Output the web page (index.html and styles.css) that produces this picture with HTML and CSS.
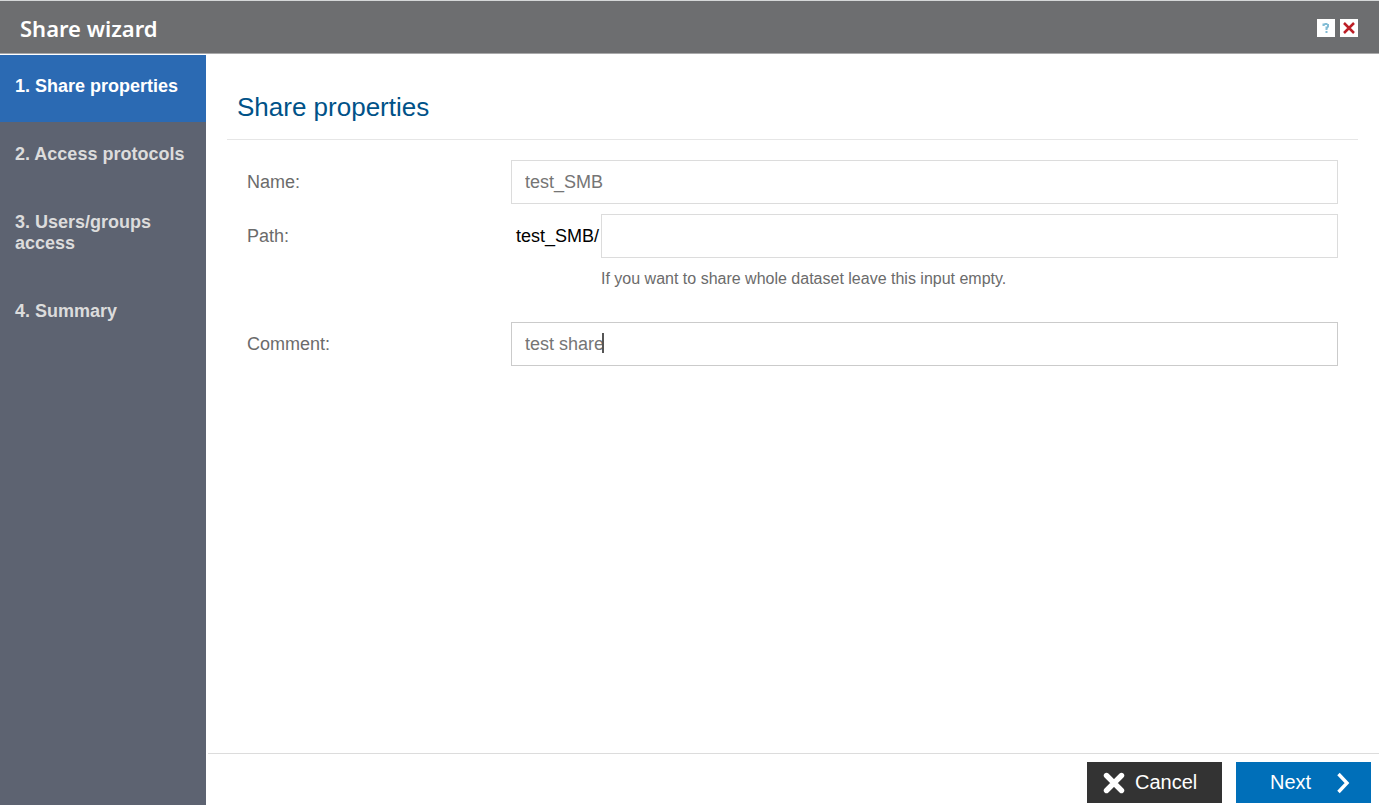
FILE: index.html
```html
<!DOCTYPE html>
<html lang="en">
<head>
<meta charset="utf-8">
<title>Share wizard</title>
<link rel="stylesheet" href="styles.css">
</head>
<body>
<div class="wizard">
  <header class="titlebar">
    <h1 class="title">Share wizard</h1>
    <div class="tools">
      <button class="tool" type="button" aria-label="Help">
        <svg width="18" height="18" viewBox="0 0 18 18" fill="none" stroke="#82bcd5" stroke-width="2"><path d="M6.500 7V5.500H8M7.500 5h3M11 5v3.500M11 8.500H9.500V11M8.500 13h2"/></svg>
      </button>
      <button class="tool" type="button" aria-label="Close">
        <svg width="18" height="18" viewBox="0 0 18 18" fill="none" stroke="#bd1f26" stroke-width="2.500"><path d="M4 4l10 10M14 4L4 14"/></svg>
      </button>
    </div>
  </header>
  <div class="body">
    <nav class="sidebar">
      <ol class="steps">
        <li class="step step-active">1. Share properties</li>
        <li class="step">2. Access protocols</li>
        <li class="step">3. Users/groups access</li>
        <li class="step">4. Summary</li>
      </ol>
    </nav>
    <main class="main">
      <form class="form">
        <h2 class="heading">Share properties</h2>
        <div class="fields">
          <label class="label" for="name">Name:</label>
          <input class="input" id="name" type="text" value="test_SMB">
          <label class="label" for="path">Path:</label>
          <div class="path">
            <span class="prefix">test_SMB/</span>
            <div class="path-field">
              <input class="input" id="path" type="text" aria-describedby="path-hint">
              <p class="hint" id="path-hint">If you want to share whole dataset leave this input empty.</p>
            </div>
          </div>
          <label class="label" for="comment">Comment:</label>
          <div class="comment">
            <input class="input input-focus" id="comment" type="text" value="test share">
            <span class="caret"></span>
          </div>
        </div>
      </form>
      <footer class="footer">
        <button class="button button-cancel" type="button">
          <svg width="22" height="22" viewBox="0 0 22 22" fill="none" stroke="#fff" stroke-width="5.400" stroke-linecap="round"><path d="M3.500 3.500l15 15M18.500 3.500l-15 15"/></svg>
          Cancel
        </button>
        <button class="button button-next" type="button">
          Next
          <svg width="14" height="22" viewBox="0 0 14 22" fill="none" stroke="#fff" stroke-width="3.400"><path d="M2.500 2l8.500 9-8.500 9"/></svg>
        </button>
      </footer>
    </main>
  </div>
</div>
</body>
</html>
```
FILE: styles.css
```css
* {
  box-sizing: border-box;
}

body {
  margin: 0;
  background: #fff;
  color: #6b6b6b;
  font-family: "Liberation Sans", Arial, sans-serif;
  font-size: 18px;
}

.wizard {
  display: flex;
  flex-direction: column;
  min-height: 100vh;
}

.titlebar {
  display: flex;
  align-items: center;
  justify-content: space-between;
  height: 54px;
  margin: 0 1px 1px 0;
  padding: 2px 21px 0 20px;
  background: #6d6e70;
  border-top: 1px solid #d5d7d8;
  border-bottom: 1px solid #a9a9aa;
}

.title {
  margin: 0;
  color: #fff;
  font-family: "Noto Sans", sans-serif;
  font-size: 22px;
  font-weight: 600;
}

.tools {
  display: flex;
  gap: 5px;
}

.tool {
  width: 18px;
  height: 18px;
  padding: 0;
  background: #fff;
  border: 0;
}

.tool svg {
  display: block;
}

.body {
  display: flex;
  flex: 1;
}

.sidebar {
  flex: none;
  width: 206px;
  background: #5d6371;
}

.steps {
  display: flex;
  flex-direction: column;
  gap: 1px;
  margin: 0;
  padding: 0;
  list-style: none;
}

.step {
  padding: 21px 15px 25px;
  color: #dcdcdc;
  font-weight: bold;
  line-height: 21px;
}

.step-active {
  background: #2b6ab3;
  color: #fff;
}

.main {
  display: flex;
  flex: 1;
  flex-direction: column;
  min-width: 0;
}

.form {
  flex: 1;
  padding: 36px 22px 20px 21px;
}

.heading {
  margin: 0;
  padding: 0 10px 16px;
  border-bottom: 1px solid #e6e6e6;
  color: #005288;
  font-size: 26px;
  font-weight: normal;
  line-height: 32px;
}

.fields {
  display: grid;
  grid-template-columns: 264px 1fr;
  row-gap: 10px;
  padding: 20px 20px 0;
}

.label {
  line-height: 44px;
}

.input {
  display: block;
  width: 100%;
  height: 44px;
  padding: 0 13px;
  background: #fff;
  border: 1px solid #dcdcdc;
  outline: 0;
  color: #757575;
  font: inherit;
}

.input-focus {
  border-color: #cbcbcb;
}

.path {
  display: flex;
  gap: 2px;
  padding-left: 5px;
}

.prefix {
  color: #000;
  line-height: 44px;
}

.path-field {
  flex: 1;
}

.hint {
  margin: 0;
  padding: 11px 0 23px;
  font-size: 16px;
  line-height: 20px;
}

.comment {
  position: relative;
}

.caret {
  position: absolute;
  top: 11px;
  left: 91px;
  width: 2px;
  height: 20px;
  background: #555;
}

.footer {
  display: flex;
  justify-content: flex-end;
  gap: 14px;
  margin: 0 1px 0 2px;
  padding: 8px 8px 2px;
  border-top: 1px solid #dcdcdc;
}

.button {
  display: flex;
  align-items: center;
  width: 135px;
  height: 41px;
  border: 0;
  color: #fff;
  font: inherit;
  font-size: 20px;
}

.button-cancel {
  gap: 10px;
  padding: 0 16px;
  background: #333;
}

.button-next {
  justify-content: space-between;
  padding: 0 21px 0 34px;
  background: #006fb9;
}
```
